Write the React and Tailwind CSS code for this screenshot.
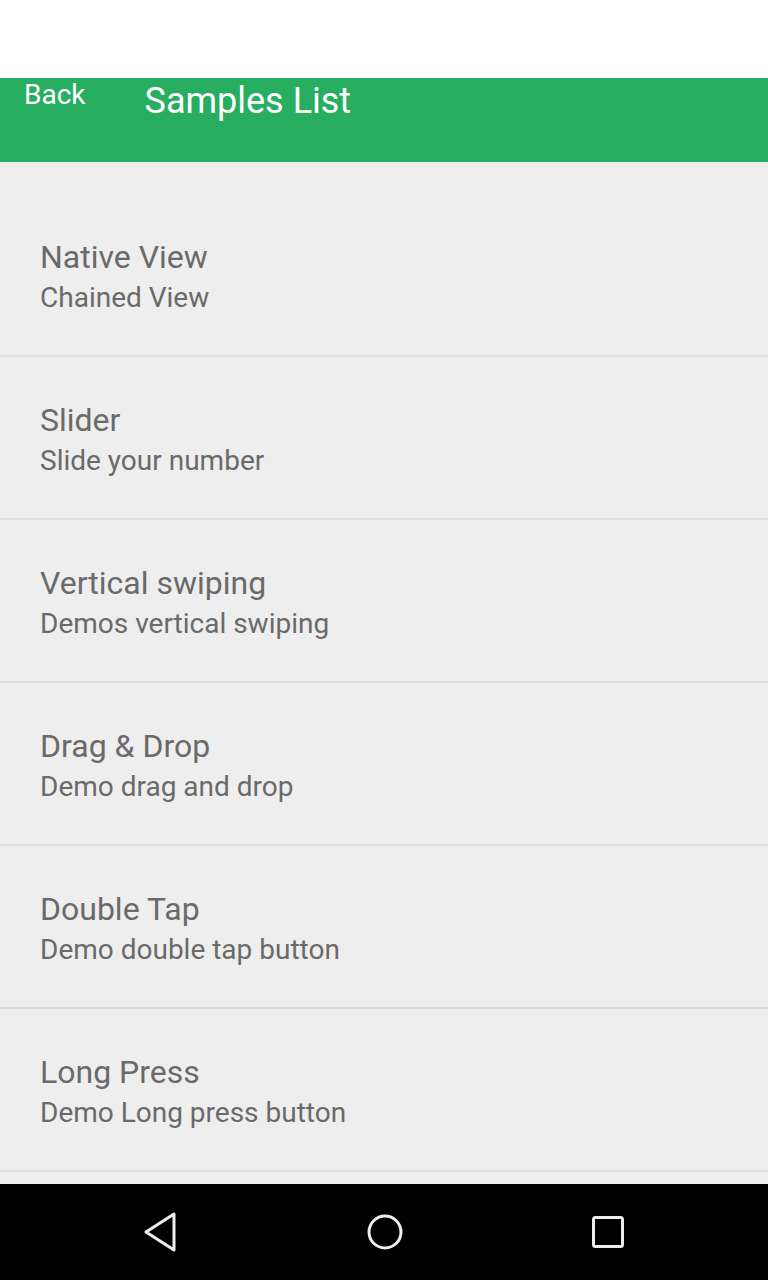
import { useState } from 'react';

const samples = [
  { title: 'Native View', subtitle: 'Chained View' },
  { title: 'Slider', subtitle: 'Slide your number' },
  { title: 'Vertical swiping', subtitle: 'Demos vertical swiping' },
  { title: 'Drag & Drop', subtitle: 'Demo drag and drop' },
  { title: 'Double Tap', subtitle: 'Demo double tap button' },
  { title: 'Long Press', subtitle: 'Demo Long press button' },
];

export default function App() {
  const [selected, setSelected] = useState(null);

  return (
    <div className="w-[768px] h-[1280px] flex flex-col bg-white overflow-hidden" style={{ fontFamily: 'Roboto, "Noto Sans", sans-serif' }}>
      {/* status bar area */}
      <div className="h-[78px] bg-white shrink-0" />

      {/* header */}
      <div className="h-[84px] bg-[#27ae60] shrink-0 flex items-start text-white">
        <button className="ml-[24px] mt-[1px] text-[28px] leading-[32px]">Back</button>
        <h1 className="ml-[59px] mt-[1px] text-[36px] leading-[44px]">Samples List</h1>
      </div>

      {/* list */}
      <div className="flex-1 bg-[#eeeeee] pt-[32px] overflow-hidden">
        {samples.map((s, i) => (
          <div
            key={i}
            onClick={() => setSelected(i)}
            className="h-[163px] border-b-2 border-[#dddddd] pl-[40px] pt-[44px] text-[#6a6a6a]"
          >
            <div className="text-[32px] leading-[38px]">{s.title}</div>
            <div className="text-[28px] leading-[34px] mt-[5px]">{s.subtitle}</div>
          </div>
        ))}
      </div>

      {/* android nav bar */}
      <div className="h-[96px] bg-black shrink-0 flex items-center justify-between pl-[143px] pr-[144px]">
        <svg width="34" height="40" viewBox="0 0 34 40" fill="none">
          <path d="M31 2 L3 20 L31 38 Z" stroke="#eeeeee" strokeWidth="3" strokeLinejoin="round" />
        </svg>
        <svg width="36" height="36" viewBox="0 0 36 36" fill="none">
          <circle cx="18" cy="18" r="16" stroke="#eeeeee" strokeWidth="3" />
        </svg>
        <svg width="32" height="32" viewBox="0 0 32 32" fill="none">
          <rect x="1.5" y="1.5" width="29" height="29" rx="2" stroke="#eeeeee" strokeWidth="3" />
        </svg>
      </div>
    </div>
  );
}
